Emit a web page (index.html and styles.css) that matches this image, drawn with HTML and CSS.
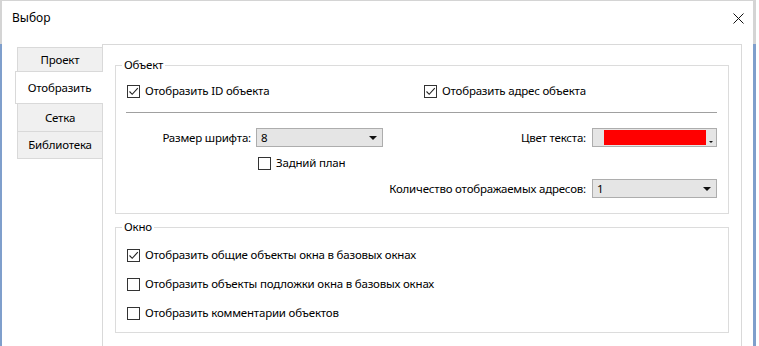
FILE: index.html
```html
<!DOCTYPE html>
<html lang="ru">
<head>
  <meta charset="UTF-8">
  <title>Выбор</title>
  <link rel="stylesheet" href="styles.css">
</head>
<body>
  <div class="window">
    <div class="titlebar">
      <span class="title">Выбор</span>
      <svg class="close" width="11" height="11" viewBox="0 0 11 11">
        <path d="M0.5 0.5 L10.5 10.5 M10.5 0.5 L0.5 10.5" stroke="#111" stroke-width="1"/>
      </svg>
    </div>

    <div class="main">
      <!-- Вкладки -->
      <ul class="tabs">
        <li class="tab tab-first">Проект</li>
        <li class="tab active">Отобразить</li>
        <li class="tab">Сетка</li>
        <li class="tab tab-last">Библиотека</li>
      </ul>

      <div class="panel">
        <!-- Объект -->
        <fieldset class="group group-object">
          <legend>Объект</legend>
          <div class="row row-checks">
            <label class="check check-wide">
              <span class="box"><svg width="11" height="11" viewBox="0 0 11 11"><path d="M1.5 5.5 L4.2 8.3 L9.8 2.2" fill="none" stroke="#222" stroke-width="1.1"/></svg></span>
              Отобразить ID объекта
            </label>
            <label class="check">
              <span class="box"><svg width="11" height="11" viewBox="0 0 11 11"><path d="M1.5 5.5 L4.2 8.3 L9.8 2.2" fill="none" stroke="#222" stroke-width="1.1"/></svg></span>
              Отобразить адрес объекта
            </label>
          </div>

          <div class="separator"></div>

          <div class="row row-combos">
            <span class="field-label label-font">Размер шрифта:</span>
            <div class="select select-font">
              <span class="select-value">8</span>
              <span class="arrow"></span>
            </div>
            <span class="spacer"></span>
            <span class="field-label">Цвет текста:</span>
            <div class="select color-pick">
              <span class="swatch"></span>
              <span class="arrow arrow-small"></span>
            </div>
          </div>

          <div class="row row-back">
            <label class="check">
              <span class="box"></span>
              Задний план
            </label>
          </div>

          <div class="row row-count">
            <span class="field-label">Количество отображаемых адресов:</span>
            <div class="select select-count">
              <span class="select-value">1</span>
              <span class="arrow"></span>
            </div>
          </div>
        </fieldset>

        <!-- Окно -->
        <fieldset class="group group-window">
          <legend>Окно</legend>
          <div class="row row-option">
            <label class="check">
              <span class="box"><svg width="11" height="11" viewBox="0 0 11 11"><path d="M1.5 5.5 L4.2 8.3 L9.8 2.2" fill="none" stroke="#222" stroke-width="1.1"/></svg></span>
              Отобразить общие объекты окна в базовых окнах
            </label>
          </div>
          <div class="row row-option">
            <label class="check">
              <span class="box"></span>
              Отобразить объекты подложки окна в базовых окнах
            </label>
          </div>
          <div class="row row-option">
            <label class="check">
              <span class="box"></span>
              Отобразить комментарии объектов
            </label>
          </div>
        </fieldset>
      </div>
    </div>
  </div>
</body>
</html>
```

FILE: styles.css
```css
body {
  margin: 0;
  background: #fff;
  font-family: "Noto Sans", Arial, sans-serif;
  font-size: 11.5px;
  letter-spacing: -0.2px;
  line-height: 16px;
  color: #000;
}

.window {
  box-sizing: border-box;
  width: 756px;
  height: 346px;
  overflow: hidden;
  background: #fff;
  border-left: 2px solid #5d8cc2;
  border-top: 1px solid #8aa9cf;
  border-right: 3px solid transparent;
  border-image: linear-gradient(to bottom, #d4d4d4 44px, #7f9fcc 44px) 1;
  border-bottom: none;
  display: flex;
  flex-direction: column;
}

.titlebar {
  height: 43px;
  flex-shrink: 0;
  display: flex;
  align-items: flex-start;
  justify-content: space-between;
  padding: 9px 0 0 10px;
  box-sizing: border-box;
}

.title {
  font-size: 12px;
  letter-spacing: 0;
}

.close {
  margin: 3px 9px 0 0;
}

.main {
  display: flex;
  flex: 1;
  padding-left: 13px;
}

/* Вкладки */
.tabs {
  list-style: none;
  margin: 0;
  padding: 3px 0 0;
  width: 87px;
  flex-shrink: 0;
}

.tab {
  box-sizing: border-box;
  margin-left: 2px;
  height: 27px;
  background: #f0f0f0;
  border: 1px solid #d9d9d9;
  border-right: none;
  border-bottom: none;
  display: flex;
  align-items: center;
  justify-content: center;
}

.tab-first {
  height: 24px;
}

.tab-last {
  border-bottom: 1px solid #d9d9d9;
  height: 28px;
}

.tab.active {
  margin-left: 0;
  margin-right: -1px;
  height: 33px;
  background: #fff;
  position: relative;
  z-index: 1;
  border-bottom: 1px solid #d9d9d9;
}

.tab.active + .tab {
  border-top: none;
}

.panel {
  box-sizing: border-box;
  width: 640px;
  height: 400px;
  border: 1px solid #d9d9d9;
  border-bottom: none;
  padding: 12px 12px 0;
  flex-shrink: 0;
}

/* Группы */
.group {
  margin: 0;
  padding: 0;
  min-width: 0;
  border: 1px solid #dcdcdc;
}

.group legend {
  margin-left: 6px;
  padding: 0 2px;
  line-height: 16px;
}

.group-object {
  padding-bottom: 15px;
}

.group-window {
  margin-top: 5px;
  padding-bottom: 11px;
}

.row {
  display: flex;
  align-items: center;
}

.row-checks {
  margin-top: 10px;
  height: 16px;
  padding-left: 11px;
}

.check {
  display: flex;
  align-items: center;
  white-space: nowrap;
}

.check-wide {
  width: 297px;
}

.box {
  box-sizing: border-box;
  width: 13px;
  height: 13px;
  border: 1px solid #333;
  background: #fff;
  margin-right: 5px;
  display: flex;
  align-items: center;
  justify-content: center;
}

.separator {
  margin: 13px 11px 0 10px;
  height: 1px;
  background: #a0a0a0;
}

.row-combos {
  margin-top: 15px;
  height: 19px;
  padding-right: 11px;
}

.label-font {
  width: 135px;
  text-align: right;
}

.field-label {
  margin-right: 6px;
}

.label-font {
  margin-right: 5px;
}

.spacer {
  flex: 1;
}

.select {
  box-sizing: border-box;
  height: 19px;
  border: 1px solid #adadad;
  background: #e5e5e5;
  display: flex;
  align-items: center;
  padding: 0 5px 0 4px;
}

.select-value {
  flex: 1;
}

.select-font {
  width: 127px;
}

.select-count {
  width: 125px;
}

.arrow {
  width: 0;
  height: 0;
  border-left: 4px solid transparent;
  border-right: 4px solid transparent;
  border-top: 4px solid #111;
}

.color-pick {
  width: 125px;
  padding: 0 3px 0 11px;
  align-items: flex-end;
}

.swatch {
  width: 103px;
  height: 15px;
  margin-bottom: 1px;
  background: #ff0000;
}

.arrow-small {
  border-left-width: 2px;
  border-right-width: 2px;
  border-top-width: 2px;
  margin: 0 0 3px 3px;
}

.row-back {
  margin-top: 8px;
  height: 16px;
  padding-left: 142px;
}

.row-count {
  margin-top: 8px;
  height: 19px;
  justify-content: flex-end;
  padding-right: 11px;
}

.row-option {
  height: 16px;
  margin-top: 13px;
  padding-left: 11px;
}

.row-option:first-of-type {
  margin-top: 12px;
}
```
